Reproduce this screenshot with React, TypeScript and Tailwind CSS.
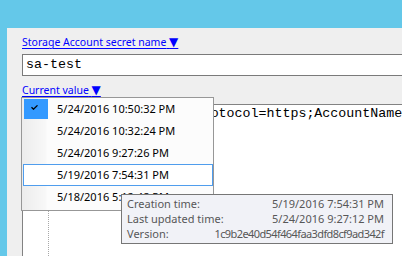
const versions = [
  { label: '5/24/2016 10:50:32 PM', checked: true },
  { label: '5/24/2016 10:32:24 PM' },
  { label: '5/24/2016 9:27:26 PM' },
  { label: '5/19/2016 7:54:31 PM', hover: true },
  { label: '5/18/2016 5:12:48 PM' },
];

const tooltipRows = [
  ['Creation time:', '5/19/2016 7:54:31 PM'],
  ['Last updated time:', '5/24/2016 9:27:12 PM'],
  ['Version:', '1c9b2e40d54f464faa3dfd8cf9ad342f'],
];

function LinkLabel({ text }: { text: string }) {
  return (
    <div className="h-[14px] leading-[14px] text-[10.5px] text-[#0000ff]">
      <span className="underline underline-offset-[2px]">
        {text} <span className="font-['DejaVu_Sans',sans-serif] text-[12px]">▼</span>
      </span>
    </div>
  );
}

export default function App() {
  return (
    <div className="relative flex w-[402px] h-[256px] overflow-hidden font-['Noto_Sans',sans-serif] bg-[#64c8e9]">
      {/* taskbar edge */}
      <div className="w-[2px] bg-[repeating-linear-gradient(to_bottom,#3b3b3b_0px,#3b3b3b_15px,#d6b64c_15px,#d6b64c_17px)]" />

      <div className="flex flex-1 flex-col pl-[7px] pt-[28px]">
        <div className="flex flex-1 flex-col bg-[#efefef] pl-[15px] pt-[7px]">
          <LinkLabel text="Storage Account secret name" />

          <div className="mt-[5px] h-[22px] border border-r-0 border-[#7a7a7a] bg-white pl-[3px] flex items-center">
            <span className="font-['Courier_New','Nimbus_Mono_PS','FreeMono','Liberation_Mono',monospace] text-[13.3px] leading-none text-black">
              sa-test
            </span>
          </div>

          <div className="mt-[7px]">
            <LinkLabel text="Current value" />
          </div>

          <div className="mt-[7px] flex flex-1 flex-col border-t border-l border-[#828282] bg-white">
            <div className="pt-[1px] pl-[44px] whitespace-nowrap font-['Courier_New','Nimbus_Mono_PS','FreeMono','Liberation_Mono',monospace] text-[13.3px] leading-[15px] text-black">
              DefaultEndpointsProtocol=https;AccountName=sa-test
            </div>
            <div className="ml-[25px] flex-1 border-l border-dotted border-[#a8a8a8]" />
          </div>
        </div>
      </div>

      {/* dropdown menu */}
      <div className="absolute left-[21px] top-[97px] w-[193px] border border-[#979797] bg-[linear-gradient(90deg,#ececec_0px,#f8f8f8_24px,#fcfcfc_25px)] pb-[2px] text-[11px] text-black">
        {versions.map((v) => (
          <div
            key={v.label}
            className={
              v.hover
                ? 'flex h-[22px] items-center ml-[1px] border border-[#4f9ded] bg-white'
                : 'flex h-[22px] items-center ml-[1px] border border-transparent'
            }
          >
            <div className="flex h-[20px] w-[24px] items-start justify-start">
              {v.checked && (
                <div className="h-[20px] w-[24px] bg-[#3399ff] pl-[7px] pt-[6px]">
                  <svg width="7" height="5" viewBox="0 0 7 5">
                    <path d="M0.5 2.2 L2.5 4.2 L6.5 0.4" fill="none" stroke="#000" strokeWidth="1.3" />
                  </svg>
                </div>
              )}
            </div>
            <span className="ml-[9px] whitespace-nowrap">{v.label}</span>
          </div>
        ))}
      </div>

      {/* tooltip */}
      <div className="absolute left-[121px] top-[194px] w-[272px] border border-[#767676] bg-[#f1f2f7] pl-[5px] pr-[8px] pt-[1px] pb-[2px] text-[11px] leading-[15px] text-[#575757]">
        {tooltipRows.map(([k, val]) => (
          <div key={k} className="flex justify-between whitespace-nowrap">
            <span>{k}</span>
            <span className={k === 'Version:' ? 'tracking-[-0.6px]' : ''}>{val}</span>
          </div>
        ))}
      </div>
    </div>
  );
}
